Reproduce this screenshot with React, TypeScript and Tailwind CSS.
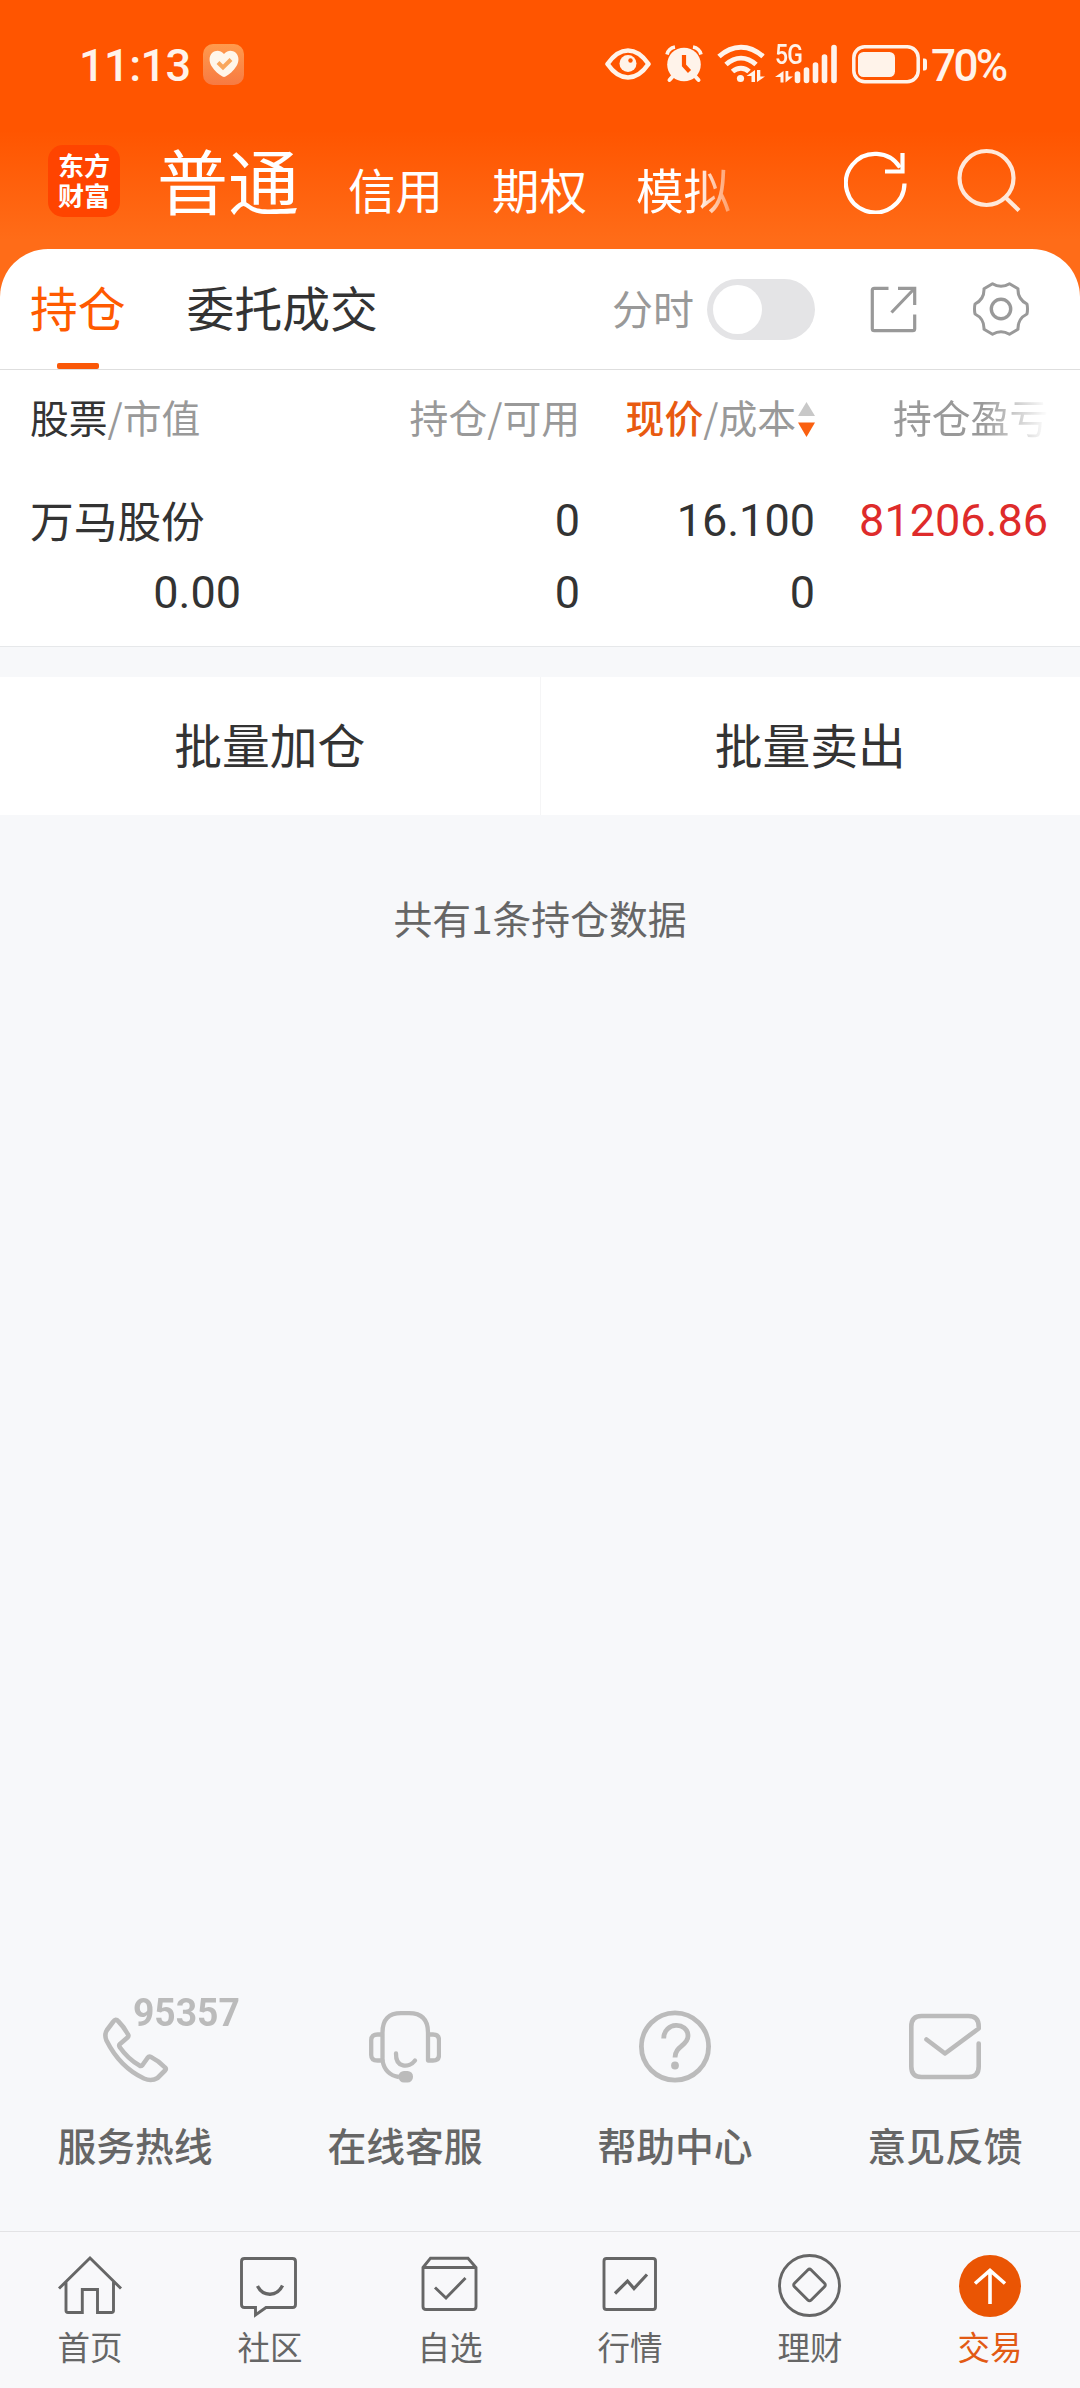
import type { ReactNode } from 'react';
import clsx from 'clsx';

function EyeIcon() {
  return (
    <svg width="46" height="32" viewBox="0 0 46 32" fill="none">
      <path d="M2.5 16C8 8 15 2.5 23 2.5S38 8 43.5 16C38 24 31 29.5 23 29.5S8 24 2.5 16Z" stroke="#fff3ea" strokeWidth="4.6" strokeLinejoin="round" />
      <circle cx="23" cy="15.5" r="8.5" fill="#fff3ea" />
      <circle cx="25.5" cy="12.5" r="2.2" fill="#ff5500" />
    </svg>
  );
}

function AlarmIcon() {
  return (
    <svg width="38" height="38" viewBox="0 0 38 38" fill="none">
      <path d="M2 9.5A10 10 0 0 1 10 2M36 9.5A10 10 0 0 0 28 2" stroke="#fff3ea" strokeWidth="3.6" />
      <circle cx="19" cy="19.5" r="17.8" fill="#ff5500" />
      <path d="M8.500 30.500l-4 4.500M29.500 30.500l4 4.500" stroke="#fff3ea" strokeWidth="4" strokeLinecap="round" />
      <circle cx="19" cy="19.5" r="16.8" fill="#fff3ea" />
      <path d="M19 10v10.5l5.5 6" stroke="#ff5500" strokeWidth="4.2" />
    </svg>
  );
}

function WifiIcon() {
  return (
    <svg width="48" height="40" viewBox="0 0 48 40" fill="none">
      <path d="M2 12.5C15.500 0 32.500 0 46 12.500M9 20.500C18.500 12 29.500 12 39 20.500M15.500 27.500C20.500 23 27.500 23 32 27.500" stroke="#fff3ea" strokeWidth="5" />
      <circle cx="23.500" cy="34.500" r="3.600" fill="#fff3ea" />
      <path d="M38 26v12h-3.500v-6h-5zM40 38V26h3.300v6.500H48z" fill="#fff3ea" />
    </svg>
  );
}

function SignalIcon() {
  return (
    <div className="relative h-[40px] w-[63px]">
      <span className="absolute left-0 top-[-1px] origin-left scale-x-[0.850] font-['Roboto',sans-serif] text-[27px] font-medium leading-[25px] tracking-[-1px] text-[#fff3ea]">5G</span>
      <svg className="absolute inset-0" width="63" height="40" viewBox="0 0 63 40" fill="none">
        <path d="M8.500 27v11.500h-3V33H0zM10.500 38.500V27h2.800v5.500H18z" fill="#fff3ea" />
        <path d="M22.500 30v6.500M31.500 26v10.500M40.500 21v15.500M49.500 13v23.500M59 3.500v33" stroke="#fff3ea" strokeWidth="5.600" strokeLinecap="round" />
      </svg>
    </div>
  );
}

function BatteryIcon() {
  return (
    <svg width="76" height="39" viewBox="0 0 76 39" fill="none">
      <rect x="1.800" y="1.800" width="64.400" height="35" rx="11" stroke="#fff3ea" strokeWidth="3.500" />
      <rect x="6" y="7" width="37" height="25" rx="5.500" fill="#fff3ea" />
      <path d="M71 13.500h1.500q2.500 0 2.500 3v6q0 3-2.500 3H71z" fill="#fff3ea" />
    </svg>
  );
}

function HealthBadge() {
  return (
    <div className="flex h-[41px] w-[41px] items-center justify-center rounded-[10px] bg-gradient-to-b from-[#ff9a4d] to-[#f77a42]">
      <svg width="30" height="28" viewBox="0 0 30 28" fill="none">
        <path d="M15 4C11-.5 6.500.2 3.500 2.500-.5 6 0 12 2.500 16 5.500 21 10 24.500 13.500 26.500q1.500.8 3 0C20 24.500 24.500 21 27.500 16 30 12 30.500 6 26.500 2.500 23.500.2 19 -.5 15 4Z" fill="#fff6ea" />
        <path d="M9 12.500l5 5 8-8" stroke="#f9a75c" strokeWidth="4" />
      </svg>
    </div>
  );
}

function StatusBar() {
  return (
    <div className="flex h-[128px] items-center pl-[79px] pr-[72px] font-['Roboto',sans-serif] text-[#fff3ea]">
      <span className="w-[124px] pt-[3px] text-[45px] font-medium leading-[50px] tracking-[-0.500px]">11:13</span>
      <HealthBadge />
      <div className="ml-auto flex items-center">
        <EyeIcon />
        <div className="ml-[14px]"><AlarmIcon /></div>
        <div className="ml-[14px]"><WifiIcon /></div>
        <div className="ml-[10px]"><SignalIcon /></div>
        <div className="ml-[14px]"><BatteryIcon /></div>
        <span className="ml-[3px] w-[77px] whitespace-nowrap pt-[4px] text-[44px] font-medium leading-[50px] tracking-[-2.600px]">70%</span>
      </div>
    </div>
  );
}

function Header() {
  return (
    <div className="flex h-[121px] items-start pl-[48px]">
      <div className="mt-[17px] flex h-[72px] w-[72px] items-center justify-center rounded-[15px] bg-[#ff4400] pb-[3px] text-[26px] font-bold leading-[30px] text-white">
        <span className="w-[52px] break-all">东方财富</span>
      </div>
      <div className="mt-[-2px] flex items-baseline whitespace-nowrap text-white">
        <span className="ml-[37px] text-[71px] leading-[104px]">普通</span>
        <span className="ml-[49px] text-[47.500px]">信用</span>
        <span className="ml-[49px] text-[47.500px]">期权</span>
        <span className="ml-[49px] text-[47.500px] [mask-image:linear-gradient(to_right,#000_62%,rgba(0,0,0,0.35)_100%)]">模拟</span>
      </div>
      <svg className="ml-[113px] mt-[22px]" width="64" height="64" viewBox="0 0 64 64" fill="none" stroke="#fff" strokeWidth="4.200">
        <path d="M60.500 33.500A29.300 29.300 0 1 1 56 17.500" />
        <path d="M58.500 3v18.500H41" />
      </svg>
      <svg className="ml-[49px] mt-[20px]" width="64" height="66" viewBox="0 0 64 66" fill="none" stroke="#ffe8da" strokeWidth="4.200">
        <circle cx="29.500" cy="30" r="27" />
        <path d="M48 49l14 13.500" />
      </svg>
    </div>
  );
}

function Tabs() {
  return (
    <div className="flex h-[121px] items-start border-b border-[#dedede] pl-[30px] pr-[51px] text-[47.800px] leading-[70px]">
      <div className="mt-[23px] flex h-[97px] flex-col items-center justify-between text-[#ff5a00]">
        <span>持仓</span>
        <span className="h-[6px] w-[42px] rounded-[2px] bg-[#fa5808]" />
      </div>
      <span className="ml-[61px] mt-[23px] text-[#333]">委托成交</span>
      <div className="ml-auto mt-[29px] flex h-[62px] items-center">
        <span className="pb-[5px] text-[41px] leading-[60px] text-[#999]">分时</span>
        <div className="ml-[13px] flex h-[61px] w-[108px] items-center rounded-full bg-[#e4e4e6] pl-[6px]">
          <div className="h-[49px] w-[49px] rounded-full bg-white" />
        </div>
        <svg className="ml-[55px]" width="47" height="47" viewBox="0 0 47 47" fill="none" stroke="#999" strokeWidth="3.200">
          <path d="M18.500 2.300H4.300q-2 0-2 2v38.400q0 2 2 2h38.400q2 0 2-2V28.500" />
          <path d="M28 2.300h16.700V19M44 3L21.500 26.500" />
        </svg>
        <svg className="ml-[56px]" width="56" height="54" viewBox="0 0 56 54" fill="none" stroke="#999" strokeWidth="3" strokeLinejoin="round">
          <path d="M19.500 1.700Q28 7 36.500 1.700L45 6.700C44.700 14 47 18.500 54 22Q55 27 54 32C47 35.500 44.700 40 45 47.300L36.500 52.300Q28 47 19.500 52.300L11 47.300C11.300 40 9 35.500 2 32Q1 27 2 22C9 18.500 11.300 14 11 6.700Z" />
          <circle cx="28" cy="27" r="9.700" strokeWidth="3.400" />
        </svg>
      </div>
    </div>
  );
}

const GRID = 'grid grid-cols-[211px_339px_235px_233px] pl-[30px]';

function Holdings() {
  return (
    <div className="h-[277px] border-b border-[#e6e8ea]">
      <div className={clsx(GRID, 'h-[96px] items-center whitespace-nowrap pb-[4px] text-[38.800px] text-[#999]')}>
        <div><span className="text-[#333]">股票</span>/市值</div>
        <div className="text-right">持仓/可用</div>
        <div className="flex items-center justify-end">
          <span><span className="font-medium text-[#e85a10]">现价</span>/成本</span>
          <svg className="ml-[2px] mt-[7px]" width="17" height="35" viewBox="0 0 17 35">
            <path d="M8.500 0L17 14H0z" fill="#c8c8c8" />
            <path d="M8.500 35L0 20.500h17z" fill="#fa6010" />
          </svg>
        </div>
        <div className="pl-[78px] [mask-image:linear-gradient(to_right,#000_72%,transparent_100%)]">持仓盈亏</div>
      </div>
      <div className={clsx(GRID, "mt-[19px] h-[72px] items-center font-['Roboto',sans-serif] text-[45px] text-[#333]")}>
        <div className="whitespace-nowrap pb-[5px] font-['Noto_Sans_CJK_SC',sans-serif] text-[43.700px] leading-[64px]">万马股份</div>
        <div className="text-right">0</div>
        <div className="text-right">16.100</div>
        <div className="text-right text-[#de2b2b]">81206.86</div>
      </div>
      <div className={clsx(GRID, "h-[72px] items-center font-['Roboto',sans-serif] text-[45px] text-[#333]")}>
        <div className="text-right">0.00</div>
        <div className="text-right">0</div>
        <div className="text-right">0</div>
      </div>
    </div>
  );
}

function BatchActions() {
  return (
    <div className="mt-[30px] flex h-[138px] bg-white text-[47.800px] text-[#333]">
      <button className="flex-1 border-r border-[#f5f5f6] pb-[5px]">批量加仓</button>
      <button className="flex-1 pb-[5px]">批量卖出</button>
    </div>
  );
}

const services: { label: string; icon: ReactNode }[] = [
  {
    label: '服务热线',
    icon: (
      <div className="relative h-[90px] w-[72px]">
        <svg className="absolute bottom-0 left-0" width="72" height="75" viewBox="0 0 72 75" fill="none" stroke="#bbb" strokeWidth="4.600" strokeLinejoin="round">
          <path d="M14 13Q16.500 9 19.500 12.500Q25 18 29 25.500Q30 27 28.500 28.500L21 35Q19.500 36.500 21 38.500Q29 50 40.500 56.500Q42 57.500 43.500 56L48.500 49Q50 47 52 48Q60 52 66 58.500Q67.500 60 66 61.500L58.500 69Q52.500 72.800 45 69.500C29 62 16 48.500 7.500 31.500Q5 25.500 8 21Z" />
        </svg>
        <span className="absolute left-[34px] top-[-1px] origin-left scale-x-[0.980] font-['Roboto',sans-serif] text-[38px] font-bold leading-[40px] text-[#bbb]">95357</span>
      </div>
    ),
  },
  {
    label: '在线客服',
    icon: (
      <svg width="72" height="75" viewBox="0 0 72 75" fill="none" stroke="#bbb" strokeWidth="4.300" strokeLinejoin="round">
        <path d="M13.500 52V23.500Q13.500 4.200 32 4.200H40Q59 4.200 59 23.500V51.500H64Q70 51.500 70 46V31Q70 25.500 64 25.500H59" />
        <path d="M13.500 25.500H8.500Q2.200 25.500 2.200 31V46Q2.200 51.500 8.500 51.500H13.500Q16 66 30 68" />
        <path d="M27 44.500C26.500 59 40 59.500 46 51.500" strokeLinecap="round" />
        <rect x="29.500" y="62" width="14.500" height="11.500" rx="5.500" fill="#bbb" stroke="none" />
      </svg>
    ),
  },
  {
    label: '帮助中心',
    icon: (
      <svg width="72" height="75" viewBox="0 0 72 75" fill="none" stroke="#bbb" strokeWidth="4.800">
        <circle cx="36" cy="37.500" r="33.600" />
        <path d="M24.700 29.500C24.700 12.500 49 12.500 49 27C49 36.500 36 37 36 48.500" />
        <circle cx="36" cy="56.500" r="3.900" fill="#bbb" stroke="none" />
      </svg>
    ),
  },
  {
    label: '意见反馈',
    icon: (
      <svg width="72" height="75" viewBox="0 0 72 75" fill="none" stroke="#bbb" strokeWidth="4.600" strokeLinecap="round" strokeLinejoin="round">
        <path d="M69.700 34.500V57.500Q69.700 68 59.500 68H12.500Q2.300 68 2.300 57.500V17.500Q2.300 7 12.500 7H59.500Q69.700 7 69.700 17.500V19.500L36 44.500L17.500 30.500" />
      </svg>
    ),
  },
];

function Services() {
  return (
    <div className="grid grid-cols-4 pb-[58px]">
      {services.map((s) => (
        <div key={s.label} className="flex flex-col items-center">
          <div className="flex h-[90px] items-end">{s.icon}</div>
          <span className="mt-[31px] text-[38.800px] font-medium leading-[58px] text-[#666]">{s.label}</span>
        </div>
      ))}
    </div>
  );
}

const navItems: { label: string; icon: ReactNode; active?: boolean }[] = [
  {
    label: '首页',
    icon: <path d="M3 36.500L34 6l31 30.500M10 30v28.500q0 2 2 2H26.300V37.500H41.500V60.500H55.500q2 0 2-2V30" />,
  },
  {
    label: '社区',
    icon: (
      <>
        <path d="M8.500 6.500h48q3 0 3 3v43q0 3-3 3H30L19.500 63V55.500H8.500q-3 0-3-3v-43q0-3 3-3z" />
        <path d="M21.500 34C27 45 41 45 46.500 33.500" strokeWidth="3.400" />
      </>
    ),
  },
  {
    label: '自选',
    icon: (
      <>
        <path d="M7 15.500L14.500 6.200H52L60 15.500V54.500q0 3-3 3H10q-3 0-3-3zM7 15.500h53" />
        <path d="M19 35.500l11 10.500 19.500-20" />
      </>
    ),
  },
  {
    label: '行情',
    icon: (
      <>
        <rect x="8" y="6.500" width="51.500" height="51" rx="2.500" />
        <path d="M19 41.500l12.500-12.500 6.500 7.500 13-14" strokeWidth="3.200" />
      </>
    ),
  },
  {
    label: '理财',
    icon: (
      <>
        <circle cx="33.500" cy="33.500" r="30" />
        <path d="M31.800 18q1.700-1.700 3.400 0l13.300 13.300q1.700 1.700 0 3.400L35.200 48q-1.700 1.700-3.400 0L18.500 34.700q-1.700-1.700 0-3.400z" />
      </>
    ),
  },
  {
    label: '交易',
    active: true,
    icon: (
      <>
        <circle cx="34" cy="34" r="31" fill="#ea5504" stroke="none" />
        <path d="M34 52V18.500M19 31.500l15-13 15 13" stroke="#fff" strokeWidth="3.600" />
      </>
    ),
  },
];

function BottomNav() {
  return (
    <div className="grid h-[157px] grid-cols-6 border-t border-[#e3e3e5] bg-[#f8f8fa]">
      {navItems.map((item) => (
        <div key={item.label} className={clsx('flex flex-col items-center', item.active ? 'text-[#e25a14]' : 'text-[#666]')}>
          <svg className="mt-[20px]" width="68" height="68" viewBox="0 0 68 68" fill="none" stroke="#666" strokeWidth="2.900">
            {item.icon}
          </svg>
          <span className="mt-[2px] text-[32.500px] leading-[48px]">{item.label}</span>
        </div>
      ))}
    </div>
  );
}

export default function App() {
  return (
    <div className="flex h-[2388px] w-[1080px] flex-col overflow-hidden bg-[#f7f8fa] font-['Noto_Sans_CJK_SC',sans-serif]">
      <div className="bg-[linear-gradient(to_bottom,#ff5500_0px,#ff5500_130px,#ff6c18_240px,#ff6c18_300px)]">
        <StatusBar />
        <Header />
        <div className="rounded-t-[48px] bg-white">
          <Tabs />
        </div>
      </div>
      <div className="bg-white">
        <Holdings />
      </div>
      <BatchActions />
      <p className="mt-[74px] text-center text-[38.800px] leading-[56px] text-[#666]">共有1条持仓数据</p>
      <div className="mt-auto">
        <Services />
      </div>
      <BottomNav />
    </div>
  );
}
